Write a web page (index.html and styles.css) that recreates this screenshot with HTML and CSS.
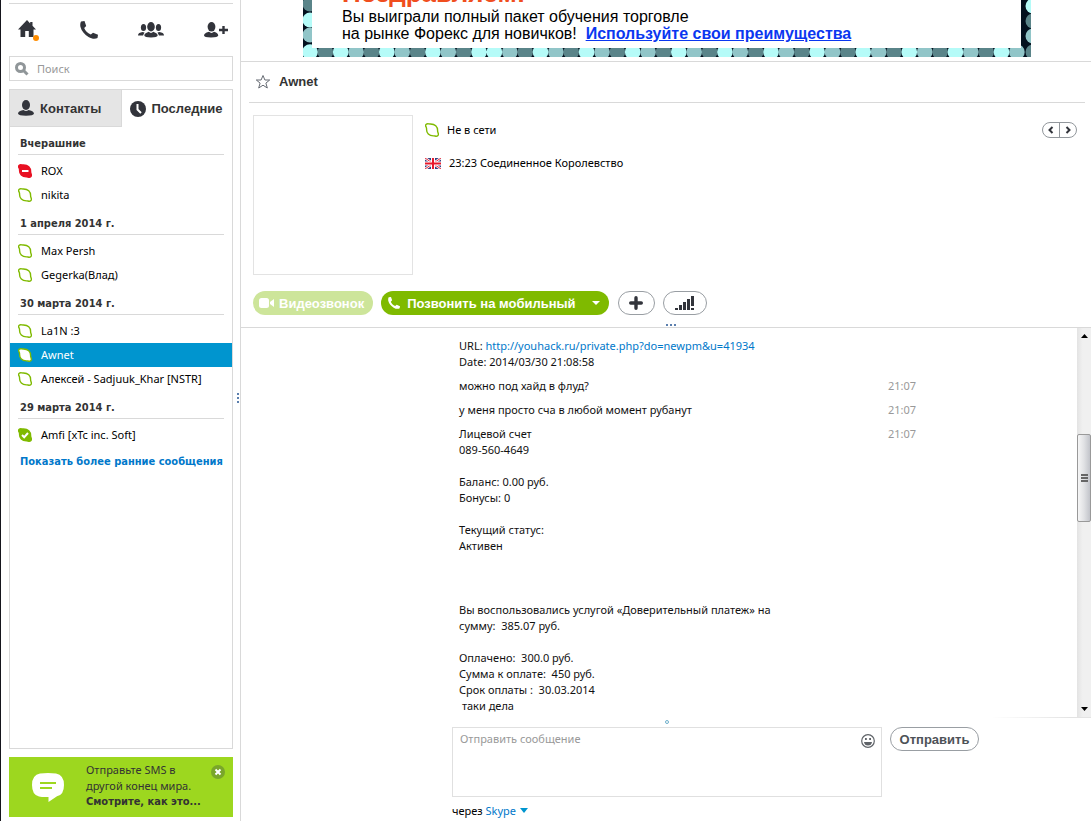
FILE: index.html
```
<!DOCTYPE html>
<html lang="ru">
  <head>
    <meta charset="UTF-8" />
    <meta name="viewport" content="width=device-width, initial-scale=1.0" />
    <title>Skype</title>
    <link rel="stylesheet" href="styles.css">
  </head>
  <body>
    <svg class="sprite" aria-hidden="true">
      <symbol id="blob" viewBox="0 0 14 14">
        <path d="M1.200 4.200C0 2.500.8.7 2.600.7C3.600.7 4.200 1 5 1C10 .8 12.800 3.500 12.600 8C12.600 9 13.400 10 13.400 11.200C13.400 12.800 12 13.400 10.800 13.200C10 13.100 9.400 12.800 8.600 12.900C4 13 1.400 10 1.600 6.200C1.600 5.400 1.500 4.800 1.200 4.200z" />
      </symbol>
      <symbol id="phone" viewBox="0 0 18 18">
        <path d="M1 .5L4.500 0L6.200 5L4.200 7C5.200 9.800 7.500 12.200 10.800 13.500L13 11.700L18 13.700L17.500 17C15.500 18.200 12 18.200 8.500 16C4.500 13.600 1.500 10 .5 6C0 3.800.2 1.800 1 .5z" />
      </symbol>
    </svg>

    <aside class="sidebar">
      <nav class="toolbar">
        <button class="tool" aria-label="Главная">
          <svg width="22" height="22" viewBox="0 0 22 22">
            <path fill="#32343b" d="M9 1L0 10.500h2.500V18h4.700v-6h3.600v6h4.700v-7.500H18L14.500 6.700V3h-2.300v1.400z" />
            <circle cx="18" cy="19" r="3" fill="#ff8d00" />
          </svg>
        </button>
        <button class="tool" aria-label="Позвонить">
          <svg class="dark" width="18" height="18"><use href="#phone" /></svg>
        </button>
        <button class="tool" aria-label="Группа">
          <svg class="dark" width="26" height="16" viewBox="0 0 26 16">
            <ellipse cx="5.500" cy="5.500" rx="2.600" ry="3.500" />
            <ellipse cx="20.500" cy="5.500" rx="2.600" ry="3.500" />
            <path d="M0 13.500C0 11 2 10.600 4.500 10L6.500 10.500L5 13.500z" />
            <path d="M26 13.500C26 11 24 10.600 21.500 10L19.500 10.500L21 13.500z" />
            <ellipse cx="13" cy="4.700" rx="3.800" ry="4.700" />
            <path d="M6.300 13.600C6.500 11.200 8.500 10.800 10.700 9.800Q13 12 15.300 9.800C17.500 10.800 19.500 11.200 19.700 13.600Q19.500 15.500 13 15.500T6.300 13.600z" />
          </svg>
        </button>
        <button class="tool" aria-label="Добавить контакт">
          <svg class="dark" width="24" height="16" viewBox="0 0 24 16">
            <ellipse cx="7.500" cy="4.800" rx="3.900" ry="4.800" />
            <path d="M0 13.600C.3 11 3 10.600 5 9.800Q7.500 12 10 9.800C12 10.600 14 11 14.300 13.600Q14 15.500 7 15.500T0 13.600z" />
            <path d="M18.300 4h2.400v2.800H24v2.400h-3.300V12h-2.400V9.200H15V6.800h3.300z" />
          </svg>
        </button>
      </nav>

      <form class="search">
        <svg width="14" height="14" viewBox="0 0 14 14">
          <circle cx="5.500" cy="5.500" r="4" />
          <path d="M8.500 8.500L12.500 12.500" />
        </svg>
        <input type="search" placeholder="Поиск" aria-label="Поиск" />
      </form>

      <section class="contacts">
        <div class="tabs">
          <button class="tab tab-gray">
            <svg class="dark" width="16" height="16" viewBox="0 0 16 16">
              <ellipse cx="8" cy="5" rx="4" ry="5" />
              <path d="M0 13.600C.3 11.200 3 10.800 5.500 10Q8 12 10.500 10C13 10.800 15.700 11.200 16 13.600Q15.500 15.800 8 15.800T0 13.600z" />
            </svg>
            Контакты
          </button>
          <button class="tab">
            <svg class="dark" width="16" height="16" viewBox="0 0 16 16">
              <circle cx="8" cy="8" r="8" />
              <path class="hands" d="M7.500 3v5.500L11 12" />
            </svg>
            Последние
          </button>
        </div>

        <h2 class="group-title">Вчерашние</h2>
        <ul class="group">
          <li><a class="contact" href="#"><svg class="status busy" width="14" height="14"><use href="#blob" /><path d="M4 7h6.500" /></svg>ROX</a></li>
          <li><a class="contact" href="#"><svg class="status" width="14" height="14"><use href="#blob" /></svg>nikita</a></li>
        </ul>

        <h2 class="group-title">1 апреля 2014 г.</h2>
        <ul class="group">
          <li><a class="contact" href="#"><svg class="status" width="14" height="14"><use href="#blob" /></svg>Max Persh</a></li>
          <li><a class="contact" href="#"><svg class="status" width="14" height="14"><use href="#blob" /></svg>Gegerka(Влад)</a></li>
        </ul>

        <h2 class="group-title">30 марта 2014 г.</h2>
        <ul class="group">
          <li><a class="contact" href="#"><svg class="status" width="14" height="14"><use href="#blob" /></svg>La1N :3</a></li>
          <li><a class="contact selected" href="#"><svg class="status" width="14" height="14"><use href="#blob" /></svg>Awnet</a></li>
          <li><a class="contact" href="#"><svg class="status" width="14" height="14"><use href="#blob" /></svg>Алексей - Sadjuuk_Khar [NSTR]</a></li>
        </ul>

        <h2 class="group-title">29 марта 2014 г.</h2>
        <ul class="group">
          <li><a class="contact" href="#"><svg class="status online" width="14" height="14"><use href="#blob" /><path d="M4 7l2.200 2.200L10 5" /></svg>Amfi [xTc inc. Soft]</a></li>
        </ul>
        <a class="show-more" href="#">Показать более ранние сообщения</a>
      </section>

      <section class="promo">
        <svg class="promo-icon" width="32" height="30" viewBox="0 0 32 30">
          <path fill="#fff" d="M8 .5Q16-.5 24 .5Q32 2 32 12T25 23.200L16.500 29V24Q10 24.200 7 23.500Q0 22 0 12T8 .5z" />
          <path stroke="#9dd71f" stroke-width="2" d="M8 10h16M8 15h12" />
        </svg>
        <p class="promo-text">Отправьте SMS в другой конец мира. <a href="#">Смотрите, как это...</a></p>
        <button class="promo-close" aria-label="Закрыть">
          <svg width="14" height="14" viewBox="0 0 14 14">
            <circle cx="7" cy="7" r="7" fill="#79a62a" />
            <path stroke="#fff" stroke-width="2" d="M4.500 4.500l5 5M9.500 4.500l-5 5" />
          </svg>
        </button>
      </section>
    </aside>

    <div class="splitter"><i></i><i></i><i></i></div>

    <main class="main">
      <div class="ad-row">
        <div class="ad">
          <svg class="ad-frame" width="728" height="57" viewBox="0 0 728 57">
            <rect width="728" height="57" fill="#03101e" />
            <!-- bottom row of dots: round caps on zero-length dashes -->
            <g stroke-width="15.600" stroke-linecap="round" stroke-dasharray="0 46.100">
              <path stroke="#5a8489" d="M22.400 52H180M222.200 52H728" />
              <path stroke="#91c5c8" d="M53.100 52H170M206.800 52H728" />
              <path stroke="#b5fbf8" d="M7 52H8M37.700 52H180M191.400 52H728" />
            </g>
            <g fill="#b5fbf8">
              <circle cx="7" cy="20" r="7.500" />
              <circle cx="730" cy="6" r="7.500" />
            </g>
            <g fill="#5a8489">
              <circle cx="7" cy="4" r="7.500" />
              <circle cx="730" cy="21" r="7.500" />
              <circle cx="730" cy="52" r="7.500" />
            </g>
            <g fill="#91c5c8">
              <circle cx="7" cy="35" r="7.500" />
              <circle cx="730" cy="36" r="7.500" />
            </g>
            <rect x="9" width="709" height="48" fill="#fff" />
          </svg>
          <div class="ad-copy">
            <strong class="ad-title">Поздравляем!</strong>
            <p>Вы выиграли полный пакет обучения торговле<br />на рынке Форекс для новичков! &nbsp;<a href="#">Используйте свои преимущества</a></p>
          </div>
        </div>
      </div>

      <header class="chat-header">
        <svg width="16" height="16" viewBox="0 0 16 16">
          <path fill="none" stroke="#666b73" d="M8 1.500L9.900 6H14.700L10.900 9.100L12.300 14L8 11.200L3.700 14L5.100 9.100L1.300 6H6.100z" />
        </svg>
        <h1>Awnet</h1>
      </header>

      <section class="profile">
        <div class="avatar"></div>
        <div class="profile-info">
          <div class="profile-line"><svg class="status" width="14" height="14"><use href="#blob" /></svg>Не в сети</div>
          <div class="profile-line">
            <svg width="16" height="11" viewBox="0 0 16 11">
              <rect width="16" height="11" fill="#35407f" />
              <path stroke="#fff" stroke-width="2.400" d="M0 0L16 11M16 0L0 11" />
              <path stroke="#e3263a" d="M0 0L16 11M16 0L0 11" />
              <path stroke="#fff" stroke-width="4" d="M8 0V11M0 5.500H16" />
              <path stroke="#e8192c" stroke-width="2" d="M8 0V11M0 5.500H16" />
            </svg>
            23:23 Соединенное Королевство
          </div>
        </div>
        <div class="pager">
          <button aria-label="Назад"><svg width="6" height="8" viewBox="0 0 6 8"><path d="M4.500 1L1.500 4L4.500 7" /></svg></button>
          <button aria-label="Вперёд"><svg width="6" height="8" viewBox="0 0 6 8"><path d="M1.500 1L4.500 4L1.500 7" /></svg></button>
        </div>
      </section>

      <div class="actions">
        <button class="pill pill-video" disabled>
          <svg width="15" height="12" viewBox="0 0 15 12"><rect y="1" width="10" height="10" rx="2.500" /><path d="M11 5l4-3v8l-4-3z" /></svg>
          Видеозвонок
        </button>
        <button class="pill pill-call">
          <svg width="12" height="12"><use href="#phone" /></svg>
          Позвонить на мобильный
          <svg class="caret" width="8" height="4" viewBox="0 0 8 4"><path d="M0 0h8L4 4z" /></svg>
        </button>
        <button class="pill pill-plus" aria-label="Добавить">
          <svg width="14" height="14" viewBox="0 0 14 14"><path stroke="#32343b" stroke-width="3.400" stroke-linecap="round" d="M7 1.700v10.600M1.700 7h10.600" /></svg>
        </button>
        <button class="pill pill-signal" aria-label="Качество связи">
          <svg width="19" height="14" viewBox="0 0 19 14"><path fill="#32343b" d="M0 12h3v2H0zM4 9h3v5H4zM8 6h3v8H8zM12 3h3v11h-3zM16 0h3v10h-3zM16 12h3v2h-3z" /></svg>
        </button>
        <div class="grip"><i></i><i></i><i></i></div>
      </div>

      <section class="chat">
        <div class="messages">
          <div class="message"><p>URL: <a href="#">http://youhack.ru/private.php?do=newpm&amp;u=41934</a>
Date: 2014/03/30 21:08:58</p></div>
          <div class="message"><p>можно под хайд в флуд?</p><time>21:07</time></div>
          <div class="message"><p>у меня просто сча в любой момент рубанут</p><time>21:07</time></div>
          <div class="message"><p>Лицевой счет
089-560-4649

Баланс: 0.00 руб.
Бонусы: 0

Текущий статус:
Активен



Вы воспользовались услугой «Доверительный платеж» на
сумму:  385.07 руб.

Оплачено:  300.0 руб.
Сумма к оплате:  450 руб.
Срок оплаты :  30.03.2014
 таки дела</p><time>21:07</time></div>
        </div>
        <div class="scrollbar">
          <svg width="7" height="4" viewBox="0 0 7 4"><path d="M0 4h7L3.500 0z" /></svg>
          <div class="thumb"><i></i><i></i><i></i></div>
          <svg width="7" height="4" viewBox="0 0 7 4"><path d="M0 0h7L3.500 4z" /></svg>
        </div>
      </section>

      <footer class="composer">
        <div class="composer-grip"><i></i></div>
        <div class="composer-row">
          <div class="message-box">
            <textarea placeholder="Отправить сообщение" aria-label="Отправить сообщение"></textarea>
            <button class="smile" aria-label="Смайлики">
              <svg width="14" height="14" viewBox="0 0 14 14">
                <circle cx="7" cy="7" r="6.300" fill="none" stroke="#5f6368" stroke-width="1.200" />
                <path fill="#5f6368" d="M4 4h1.800v2H4zM8.200 4H10v2H8.200zM3 8h8q-.5 3.500-4 3.500T3 8z" />
              </svg>
            </button>
          </div>
          <button class="pill send">Отправить</button>
        </div>
        <p class="via">через <a href="#">Skype <svg width="8" height="5" viewBox="0 0 8 5"><path d="M0 0h8L4 5z" /></svg></a></p>
      </footer>
    </main>
  </body>
</html>
```
FILE: styles.css
```
* {
  box-sizing: border-box;
}

body {
  display: flex;
  height: 100vh;
  margin: 0;
  overflow: hidden;
  border-left: 1px solid #15151c;
  background: #fff;
  color: #111;
  font-family: "Noto Sans", sans-serif;
  font-size: 11px;
  line-height: 16px;
}

h1,
h2,
p,
ul {
  margin: 0;
  padding: 0;
}

ul {
  list-style: none;
}

a {
  color: #0078ca;
  text-decoration: none;
}

button {
  padding: 0;
  border: none;
  background: none;
  font-family: "Liberation Sans", Arial, sans-serif;
  font-size: 13px;
  font-weight: bold;
  cursor: pointer;
}

svg {
  display: block;
  flex: none;
}

.sprite {
  position: absolute;
  width: 0;
  height: 0;
}

.dark {
  fill: #32343b;
}

/* Sidebar */

.sidebar {
  display: flex;
  flex-direction: column;
  flex: none;
  width: 232px;
  padding: 3px 0 4px 8px;
}

.toolbar {
  display: flex;
  align-items: center;
  justify-content: space-between;
  height: 53px;
  padding: 0 5px 0 9px;
  border-top: 1px solid #d9d9d9;
}

.search {
  display: flex;
  align-items: center;
  flex: none;
  height: 25px;
  padding-left: 5px;
  gap: 8px;
  border: 1px solid #d9d9d9;
}

.search svg {
  fill: none;
  stroke: #909699;
  stroke-width: 3;
}

.search input {
  flex: 1;
  min-width: 0;
  padding: 0;
  border: none;
  outline: none;
  font: inherit;
}

::placeholder {
  color: #999;
  opacity: 1;
}

.contacts {
  flex: 1;
  margin: 8px 0;
  border: 1px solid #d9d9d9;
}

.tabs {
  display: flex;
  height: 37px;
}

.tab {
  display: flex;
  align-items: center;
  flex: 1;
  padding-left: 8px;
  gap: 6px;
  color: #333;
}

.tab-gray {
  border-right: 1px solid #d9d9d9;
  border-bottom: 1px solid #d9d9d9;
  background: #e5e5e5;
}

.hands {
  fill: none;
  stroke: #fff;
  stroke-width: 2;
}

.group-title {
  height: 28px;
  margin: 0 8px 4px;
  padding: 9px 0 0 2px;
  border-bottom: 1px solid #d9d9d9;
  color: #333;
  font-family: "DejaVu Sans Condensed", "DejaVu Sans", sans-serif;
  font-size: 11px;
}

.contact {
  display: flex;
  align-items: center;
  height: 24px;
  padding-left: 8px;
  gap: 9px;
  color: #000;
}

.contact.selected {
  background: #0095cf;
  color: #fff;
}

.status {
  fill: #fff;
  stroke: #7fba00;
  stroke-width: 1.4;
  overflow: visible;
}

.status.busy {
  fill: #e81123;
  stroke: #e81123;
}

.status.online {
  fill: #7fba00;
}

.status > path {
  fill: none;
  stroke: #fff;
  stroke-width: 2;
}

.show-more {
  display: block;
  margin: 7px 0 0 10px;
  font-family: "DejaVu Sans Condensed", "DejaVu Sans", sans-serif;
  font-weight: bold;
  white-space: nowrap;
}

.promo {
  display: flex;
  align-items: flex-start;
  height: 60px;
  padding: 5px 8px 0 23px;
  background: #9dd71f;
}

.promo-icon {
  margin-top: 11px;
}

.promo-text {
  flex: 1;
  margin-left: 22px;
  color: #333;
}

.promo-text a {
  display: block;
  color: #333;
  font-family: "DejaVu Sans Condensed", "DejaVu Sans", sans-serif;
  font-weight: bold;
  white-space: nowrap;
}

.promo-close {
  margin-top: 3px;
}

.splitter {
  display: flex;
  flex-direction: column;
  align-items: center;
  justify-content: center;
  flex: none;
  width: 8px;
  padding: 0 0 26px 2px;
  gap: 2px;
  border-right: 1px solid #d9d9d9;
}

.splitter i,
.grip i {
  width: 2px;
  height: 2px;
  background: #5b7fae;
}

/* Main column */

.main {
  display: flex;
  flex-direction: column;
  flex: 1;
  min-width: 0;
}

.ad-row {
  flex: none;
  height: 62px;
  padding-left: 62px;
  overflow: hidden;
  border-bottom: 1px solid #d9d9d9;
}

.ad {
  position: relative;
  width: 728px;
  height: 57px;
  overflow: hidden;
  font-family: "Liberation Sans", Arial, sans-serif;
  font-size: 16px;
  line-height: 17px;
  color: #000;
}

.ad-frame {
  position: absolute;
  top: 0;
  left: 0;
}

.ad-copy {
  position: relative;
  display: flex;
  flex-direction: column;
  justify-content: flex-end;
  height: 100%;
  padding: 0 0 15px 39px;
  white-space: nowrap;
}

.ad-title {
  margin-bottom: 3px;
  color: #f04e1e;
  font-size: 26px;
  line-height: 24px;
}

.ad a {
  color: #0a37f0;
  font-weight: bold;
  text-decoration: underline;
}

.chat-header {
  display: flex;
  align-items: center;
  flex: none;
  height: 41px;
  margin: 0 6px 0 8px;
  padding-left: 6px;
  gap: 8px;
  border-bottom: 1px solid #d9d9d9;
}

.chat-header h1 {
  color: #333;
  font-family: "Liberation Sans", Arial, sans-serif;
  font-size: 13px;
}

.profile {
  display: flex;
  align-items: flex-start;
  flex: none;
  padding: 12px 14px 16px 12px;
}

.avatar {
  width: 160px;
  height: 160px;
  border: 1px solid #e3e3e3;
}

.profile-info {
  display: flex;
  flex-direction: column;
  flex: 1;
  gap: 17px;
  margin: 7px 0 0 12px;
  color: #000;
}

.profile-line {
  display: flex;
  align-items: center;
  gap: 8px;
}

.pager {
  display: flex;
  width: 35px;
  height: 16px;
  margin-top: 7px;
  border: 1px solid #92979c;
  border-radius: 8px;
}

.pager button {
  display: flex;
  align-items: center;
  justify-content: center;
  flex: 1;
}

.pager button:first-child {
  border-right: 1px solid #92979c;
}

.pager path {
  fill: none;
  stroke: #32343b;
  stroke-width: 2;
}

.actions {
  position: relative;
  display: flex;
  flex: none;
  height: 37px;
  padding-left: 12px;
  border-bottom: 1px solid #d9d9d9;
}

.pill {
  display: flex;
  align-items: center;
  justify-content: center;
  height: 24px;
  border-radius: 12px;
  white-space: nowrap;
}

.pill-video,
.pill-call {
  gap: 5px;
  padding: 0 9px 0 6px;
  color: #fff;
  fill: #fff;
}

.pill-video {
  background: #cde59a;
}

.pill-call {
  margin-left: 8px;
  padding-left: 7px;
  gap: 7px;
  background: #7fba00;
}

.caret {
  margin-left: 9px;
}

.pill-plus,
.pill-signal,
.send {
  border: 1px solid #999ea3;
}

.pill-plus {
  width: 37px;
  margin-left: 9px;
}

.pill-signal {
  width: 44px;
  margin-left: 8px;
}

.grip {
  position: absolute;
  bottom: 1px;
  left: 50%;
  display: flex;
  gap: 2px;
}

.chat {
  display: flex;
  flex: 1;
  min-height: 0;
}

.messages {
  flex: 1;
  padding: 10px 0 0 218px;
  overflow: hidden;
}

.message {
  display: flex;
  margin-bottom: 8px;
}

.message p {
  width: 429px;
  white-space: pre-wrap;
}

.message time {
  color: #999;
}

.scrollbar {
  display: flex;
  flex-direction: column;
  align-items: center;
  justify-content: space-between;
  width: 14px;
  padding: 6px 0;
  background: linear-gradient(to right, #e3e3e3, #f0f0f0 40%);
}

.thumb {
  display: flex;
  flex-direction: column;
  align-items: center;
  justify-content: center;
  width: 14px;
  height: 88px;
  margin-bottom: 89px;
  gap: 1px;
  border: 1px solid #999;
  border-radius: 2px;
  background: linear-gradient(to right, #f6f6f6, #e0e1e4 50%, #c2c4ca);
}

.thumb i {
  width: 7px;
  height: 2px;
  background: #666;
}

.composer {
  flex: none;
  height: 104px;
  padding-left: 211px;
  background: linear-gradient(to right, transparent 750px, #e3e3e3 830px) no-repeat 0 0 / 100% 1px;
}

.composer-grip {
  display: flex;
  justify-content: center;
  width: 430px;
  height: 10px;
  padding-top: 3px;
}

.composer-grip i {
  width: 4px;
  height: 4px;
  border: 1px solid #6fb0cc;
  border-radius: 2px;
}

.composer-row {
  display: flex;
  align-items: flex-start;
}

.message-box {
  display: flex;
  align-items: flex-start;
  width: 430px;
  height: 70px;
  padding: 3px 6px 4px 7px;
  border: 1px solid #e0e0e0;
}

.message-box textarea {
  flex: 1;
  height: 60px;
  padding: 0;
  border: none;
  outline: none;
  resize: none;
  font: inherit;
}

.smile {
  margin-top: 3px;
}

.send {
  width: 89px;
  margin-left: 8px;
  color: #4d5257;
}

.via {
  margin-top: 6px;
  color: #000;
}

.via svg {
  display: inline-block;
  margin: 0 0 2px 1px;
  fill: #0095cf;
}
```
